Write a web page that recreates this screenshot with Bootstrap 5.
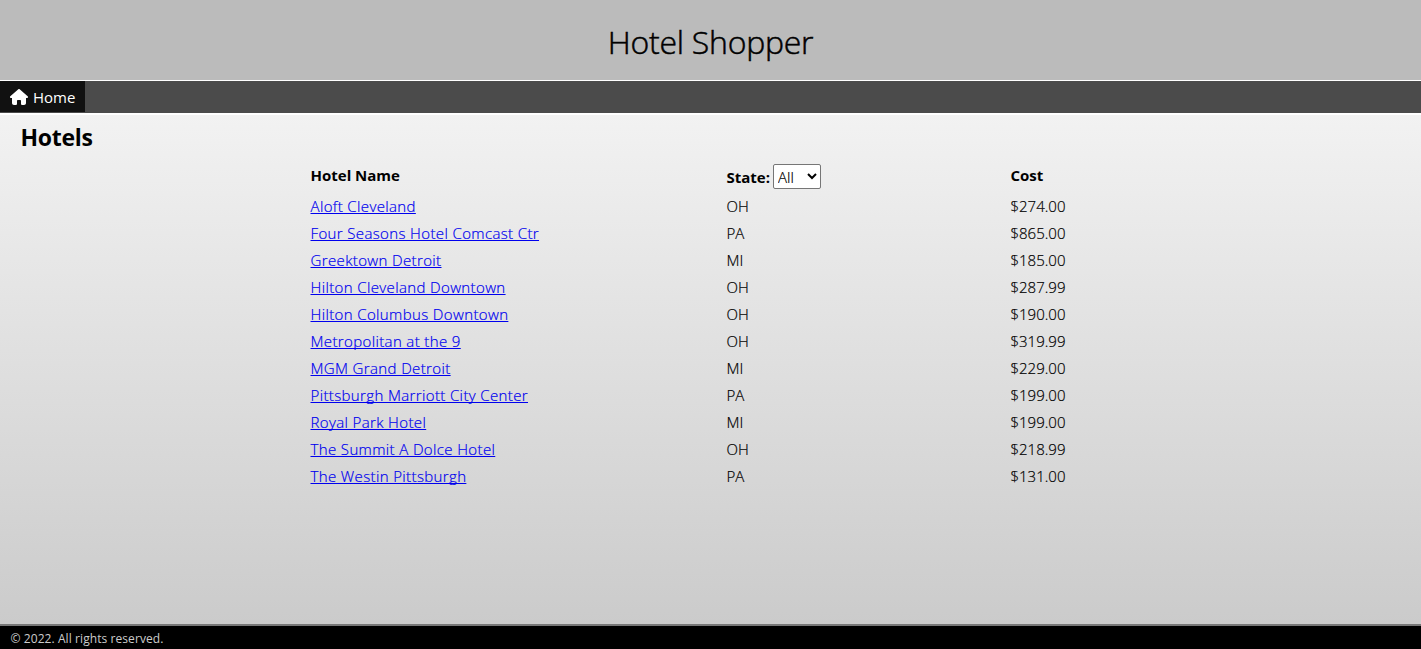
<!DOCTYPE html>
<html lang="en">
<head>
<meta charset="utf-8">
<title>Hotel Shopper</title>
<link href="https://cdn.jsdelivr.net/npm/bootstrap@5.3.0/dist/css/bootstrap.min.css" rel="stylesheet">
<style>
body{font-family:"Open Sans","Noto Sans",sans-serif;font-weight:300;font-size:15px;line-height:21px;color:#000;background:#fff;overflow:hidden}
.site-header{height:81px;background:#bbb;border-bottom:1px solid #fff;padding-top:5px}
.site-header h1{font-size:32px;font-weight:300;letter-spacing:-.25px;line-height:1.2;-webkit-text-stroke:.5px #000}
.site-nav{height:32px;background:#4b4b4b}
.home-link{width:85px;height:31px;background:#111;color:#fff;font-weight:400;font-size:15px;padding:1px 0 0 10px;gap:5px}
.home-link svg{width:18px;height:16px;margin-top:-1px}
.site-main{border-top:2px solid #fff;background:linear-gradient(#f2f2f2,#cbcbcb)}
.page-title{font-size:23px;font-weight:700;line-height:30px;letter-spacing:-.3px;padding:7px 0 0 20.500px}
.hotels{width:800px;margin:10px 0 0 308.500px;border-collapse:separate;border-spacing:2px;table-layout:fixed}
.hotels th,.hotels td{padding:2px 0;height:25px;vertical-align:top}
.hotels td,.state-select{-webkit-text-stroke:.2px currentColor}
.hotels th{font-weight:700;height:28px;font-size:15px;padding-top:1px}
.hotels a{color:#00e;letter-spacing:.37px;text-underline-offset:1px;text-decoration-thickness:1px;text-decoration-skip-ink:none}
.state-select{width:48px;height:25px;padding:0 1px 0 0;margin-left:3px;font:300 15px "Open Sans",sans-serif;color:#000;background:#fff;border:1px solid #767676;border-radius:2px}
.state-label{padding-top:2px}
.site-footer{height:25px;background:#000;border-top:2px solid #777;color:#ccc;font-size:12px;font-weight:400;letter-spacing:.08px;line-height:25px;padding-left:10.500px}
</style>
</head>
<body>
<div class="d-flex flex-column vh-100">
<header class="site-header d-flex align-items-center justify-content-center flex-shrink-0"><h1 class="m-0">Hotel Shopper</h1></header>
<nav class="site-nav flex-shrink-0"><a href="#" class="home-link d-flex align-items-center text-decoration-none"><svg viewBox="0 0 576 512" fill="#fff" aria-hidden="true"><path d="M575.8 255.5c0 18-15 32.1-32 32.1h-32l.7 160.2c0 35-28 64.2-64 64.2H392c-22 0-40-18-40-40v-88c0-18-14-32-32-32h-64c-18 0-32 14-32 32v88c0 22-18 40-40 40h-56c-36 0-64-29-64-64V287.6H32c-18 0-32-14-32-32.1 0-9 3-17 10-24L266.4 8c7-7 15-8 22-8s15 2 21 7l255.4 224.500c8 7 12 15 11 24z"/></svg><span>Home</span></a></nav>
<main class="site-main flex-grow-1">
<h2 class="page-title m-0">Hotels</h2>
<table class="hotels">
<colgroup><col style="width:414px"><col style="width:282px"><col></colgroup>
<thead><tr><th>Hotel Name</th><th class="p-0"><div class="d-flex align-items-center"><label for="state" class="state-label">State:</label><select id="state" class="state-select"><option>All</option><option>MI</option><option>OH</option><option>PA</option></select></div></th><th>Cost</th></tr></thead>
<tbody>
<tr><td><a href="#">Aloft Cleveland</a></td><td>OH</td><td>$274.00</td></tr>
<tr><td><a href="#">Four Seasons Hotel Comcast Ctr</a></td><td>PA</td><td>$865.00</td></tr>
<tr><td><a href="#">Greektown Detroit</a></td><td>MI</td><td>$185.00</td></tr>
<tr><td><a href="#">Hilton Cleveland Downtown</a></td><td>OH</td><td>$287.99</td></tr>
<tr><td><a href="#">Hilton Columbus Downtown</a></td><td>OH</td><td>$190.00</td></tr>
<tr><td><a href="#">Metropolitan at the 9</a></td><td>OH</td><td>$319.99</td></tr>
<tr><td><a href="#">MGM Grand Detroit</a></td><td>MI</td><td>$229.00</td></tr>
<tr><td><a href="#">Pittsburgh Marriott City Center</a></td><td>PA</td><td>$199.00</td></tr>
<tr><td><a href="#">Royal Park Hotel</a></td><td>MI</td><td>$199.00</td></tr>
<tr><td><a href="#">The Summit A Dolce Hotel</a></td><td>OH</td><td>$218.99</td></tr>
<tr><td><a href="#">The Westin Pittsburgh</a></td><td>PA</td><td>$131.00</td></tr>
</tbody>
</table>
</main>
<footer class="site-footer flex-shrink-0">© 2022. All rights reserved.</footer>
</div>
<script src="https://cdn.jsdelivr.net/npm/bootstrap@5.3.0/dist/js/bootstrap.bundle.min.js"></script>
</body>
</html>
